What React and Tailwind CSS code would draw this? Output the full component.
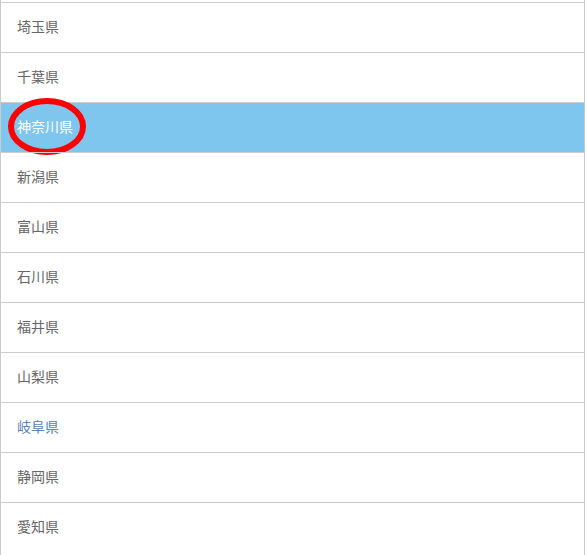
import React from "react";

const items = ["埼玉県", "千葉県", "神奈川県", "新潟県", "富山県", "石川県", "福井県", "山梨県", "岐阜県", "静岡県", "愛知県"];

export default function App() {
  return (
    <div className="w-[587px] h-[555px] overflow-hidden bg-white" style={{ fontFamily: '"Noto Sans CJK JP", "Noto Sans", sans-serif' }}>
      <div className="w-[585px] border-x border-[#cccccc] h-[560px]">
        <div className="h-[2px]" />
        {items.map((name, i) => {
          const selected = i === 2;
          return (
            <div
              key={name}
              className={`relative h-[50px] border-t border-[#cccccc] flex items-center pl-[16px] pb-[2px] text-[14px] ${selected ? "bg-[#7fc6ee] text-white" : "text-[#666666]"}`}
            >
              <span className={i === 8 ? "text-[#5a82b8]" : ""}>{name}</span>
              {selected && (
                <svg className="absolute left-[4px] top-[-6px]" width="84" height="64" viewBox="0 0 84 64">
                  <ellipse cx="42" cy="29.5" rx="36" ry="25.5" fill="none" stroke="#ff0000" strokeWidth="6" />
                </svg>
              )}
            </div>
          );
        })}
      </div>
    </div>
  );
}
